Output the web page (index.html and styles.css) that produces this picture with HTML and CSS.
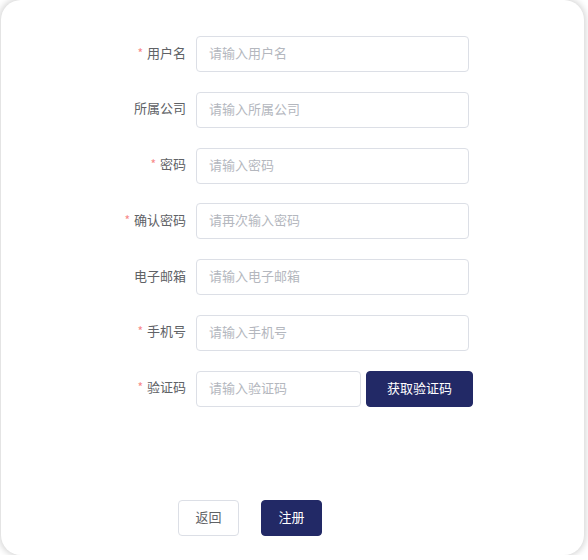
FILE: index.html
```html
<!DOCTYPE html>
<html lang="zh-CN">
<head>
    <meta charset="UTF-8">
    <meta name="viewport" content="width=device-width, initial-scale=1.0">
    <title>注册</title>
    <link rel="stylesheet" href="styles.css">
</head>
<body>
    <div class="card">
        <form class="register-form" onsubmit="return false">
            <div class="form-item">
                <label class="form-label required">用户名</label>
                <input class="form-input" type="text" placeholder="请输入用户名">
            </div>
            <div class="form-item">
                <label class="form-label">所属公司</label>
                <input class="form-input" type="text" placeholder="请输入所属公司">
            </div>
            <div class="form-item">
                <label class="form-label required">密码</label>
                <input class="form-input" type="password" placeholder="请输入密码">
            </div>
            <div class="form-item">
                <label class="form-label required">确认密码</label>
                <input class="form-input" type="password" placeholder="请再次输入密码">
            </div>
            <div class="form-item">
                <label class="form-label">电子邮箱</label>
                <input class="form-input" type="text" placeholder="请输入电子邮箱">
            </div>
            <div class="form-item">
                <label class="form-label required">手机号</label>
                <input class="form-input" type="text" placeholder="请输入手机号">
            </div>
            <div class="form-item">
                <label class="form-label required">验证码</label>
                <input class="form-input code-input" type="text" placeholder="请输入验证码">
                <button class="btn btn-primary code-btn" type="button">获取验证码</button>
            </div>
        </form>

        <div class="actions">
            <button class="btn btn-default" type="button">返回</button>
            <button class="btn btn-primary" type="button">注册</button>
        </div>
    </div>
</body>
</html>
```

FILE: styles.css
```css
body {
    margin: 0;
    background-color: #fff;
    font-family: "Noto Sans CJK SC", "Noto Sans", sans-serif;
    font-size: 13px;
}
.card {
    width: 583px;
    height: 555px;
    margin-left: 1px;
    background-color: #fff;
    border-radius: 20px;
    box-shadow: 0 0 6px 2px rgba(0, 0, 0, 0.16);
    padding-top: 36px;
    box-sizing: border-box;
}
.register-form {
    margin-left: 85px;
}
.form-item {
    display: flex;
    align-items: center;
    height: 36px;
    margin-bottom: 19.8px;
}
.form-label {
    width: 110px;
    padding: 0 10px 4px 0; /* lift the CJK glyphs to the input's centre */
    box-sizing: border-box;
    text-align: right;
    color: #606266;
}
.form-label.required::before {
    content: "*";
    color: #f78989;
    font-size: 12px;
    margin-right: 4px;
}
.form-input {
    width: 273px;
    height: 36px;
    padding: 0 12px 3px;
    border: 1px solid #dcdfe6;
    border-radius: 4px;
    box-sizing: border-box;
    font-family: inherit;
    font-size: 13px;
    color: #606266;
    outline: none;
}
.form-input::placeholder {
    color: #b4b7be;
}
.code-input {
    width: 165px;
}
.btn {
    height: 36px;
    padding: 0 0 3px;
    border-radius: 4px;
    font-family: inherit;
    font-size: 13px;
    cursor: pointer;
    box-sizing: border-box;
}
.btn-primary {
    background-color: #222966;
    border: 1px solid #222966;
    color: #fff;
}
.btn-default {
    background-color: #fff;
    border: 1px solid #dcdfe6;
    color: #606266;
}
.code-btn {
    width: 107px;
    margin-left: 5px;
}
.actions {
    display: flex;
    gap: 22px;
    margin: 93px 0 0 177px;
}
.actions .btn {
    width: 61px;
}
```
